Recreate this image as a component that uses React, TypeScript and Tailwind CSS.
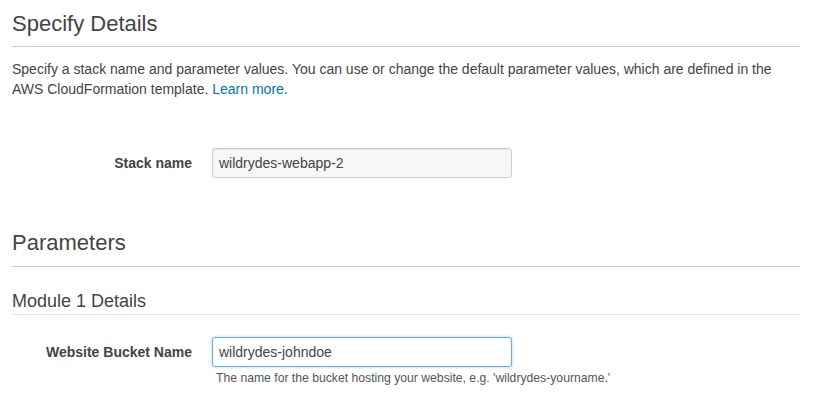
import React from "react";

export default function App() {
  return (
    <div
      className="w-[815px] h-[418px] bg-white text-[#444] overflow-hidden pl-3 pr-[15px]"
      style={{ fontFamily: '"Liberation Sans", Arial, sans-serif' }}
    >
      <h2 className="pt-[11px] text-[22px] leading-[26px] text-[#444] mb-[9px]">Specify Details</h2>
      <div className="h-px bg-[#ccc]" />
      <p className="mt-[12px] text-[14px] leading-[20px] text-[#444]">
        Specify a stack name and parameter values. You can use or change the default parameter values, which are defined in the
        <br />
        AWS CloudFormation template. <a className="text-[#0073bb]">Learn more.</a>
      </p>

      <div className="mt-[49px] flex items-center">
        <label className="w-[180px] text-right text-[14px] font-bold text-[#444]">Stack name</label>
        <div className="ml-5 w-[300px] h-[30px] rounded-[3px] border border-[#ccc] bg-[#f7f7f7] flex items-center pl-[6px] text-[14px] text-[#444] shadow-[inset_0_1px_1px_rgba(0,0,0,0.06)]">
          wildrydes-webapp-2
        </div>
      </div>

      <h2 className="mt-[52px] text-[22px] leading-[26px] text-[#444] mb-[10px]">Parameters</h2>
      <div className="h-px bg-[#ccc]" />

      <h3 className="mt-[23px] text-[18px] leading-[22px] text-[#444] pb-[2px] border-b border-[#e5e5e5]">
        Module 1 Details
      </h3>

      <div className="mt-[22px] flex items-start">
        <label className="w-[180px] h-[30px] flex items-center justify-end text-[14px] font-bold text-[#444]">
          Website Bucket Name
        </label>
        <div className="ml-5 flex flex-col">
          <div className="w-[300px] h-[30px] rounded-[3px] border border-[#66afe9] bg-white flex items-center pl-[6px] text-[14px] text-[#444] shadow-[0_0_3px_rgba(102,175,233,0.6)]">
            wildrydes-johndoe
          </div>
          <div className="mt-[3px] ml-[4px] text-[12.2px] leading-[16px] text-[#555]">
            The name for the bucket hosting your website, e.g. 'wildrydes-yourname.'
          </div>
        </div>
      </div>
    </div>
  );
}
